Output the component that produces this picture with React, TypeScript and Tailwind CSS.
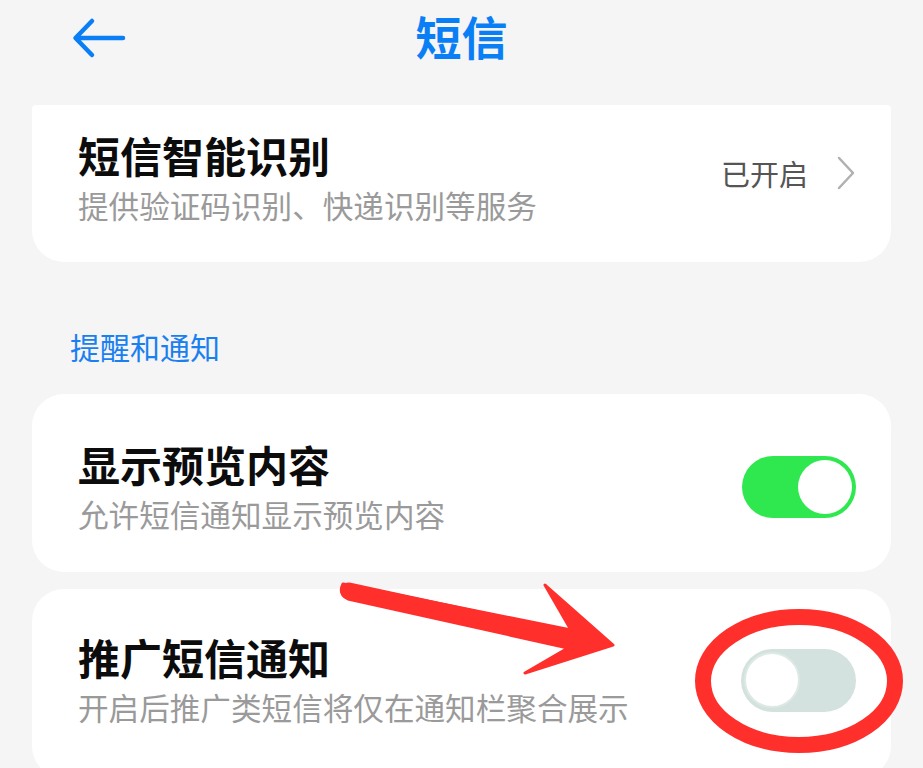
const font = { fontFamily: '"Noto Sans CJK SC", "Noto Sans", sans-serif' };

function Toggle({ on }: { on: boolean }) {
  return on ? (
    <div className="flex h-[62px] w-[114px] items-center justify-end rounded-full bg-[#2fe850] px-[4px]">
      <div className="h-[54px] w-[54px] rounded-full bg-white" />
    </div>
  ) : (
    <div className="flex h-[63px] w-[115px] items-center justify-start rounded-full bg-[#d3e2de] px-[3px]">
      <div className="h-[56px] w-[56px] rounded-full border-[2px] border-[#dde9e5] bg-white" />
    </div>
  );
}

function Row({
  title,
  sub,
  right,
  className,
}: {
  title: string;
  sub: string;
  right: React.ReactNode;
  className: string;
}) {
  return (
    <div className={`mx-[32px] flex items-center bg-white pl-[46px] pr-[35px] ${className}`}>
      <div className="flex flex-1 flex-col gap-[4px]">
        <div className="text-[42px] font-bold leading-[50px] text-[#0c0c0c]">{title}</div>
        <div className="text-[30.6px] leading-[42px] text-[#9a9a9a]">{sub}</div>
      </div>
      {right}
    </div>
  );
}

export default function App() {
  return (
    <div className="relative h-[768px] w-[923px] overflow-hidden bg-[#f5f5f5]" style={font}>
      {/* header */}
      <div className="relative flex h-[105px] items-start justify-center">
        <svg className="absolute left-[70px] top-[16px]" width="60" height="44" viewBox="0 0 60 44">
          <path
            d="M53 22H6M22 5L5.5 22L22 39"
            fill="none"
            stroke="#0a7ff5"
            strokeWidth="4.5"
            strokeLinecap="round"
            strokeLinejoin="round"
          />
        </svg>
        <div className="pt-[4px] text-[46px] font-bold leading-[62px] text-[#0a7ff5]">短信</div>
      </div>

      <Row
        title="短信智能识别"
        sub="提供验证码识别、快递识别等服务"
        className="rounded-b-[32px] rounded-t-[4px] pb-[36px] pt-[25px]"
        right={
          <div className="flex items-center gap-[28px] pb-[10px]">
            <span className="text-[29px] leading-[40px] text-[#555]">已开启</span>
            <svg width="20" height="34" viewBox="0 0 20 34">
              <path
                d="M3 2L17 17L3 32"
                fill="none"
                stroke="#b0b0b0"
                strokeWidth="2.5"
                strokeLinecap="round"
                strokeLinejoin="round"
              />
            </svg>
          </div>
        }
      />

      <div className="pb-[27px] pl-[70px] pt-[63px] text-[30px] leading-[42px] text-[#1a80f0]">提醒和通知</div>

      <Row
        title="显示预览内容"
        sub="允许短信通知显示预览内容"
        className="rounded-[32px] pb-[37px] pt-[45px]"
        right={<Toggle on />}
      />

      <div className="h-[17px]" />

      <Row
        title="推广短信通知"
        sub="开启后推广类短信将仅在通知栏聚合展示"
        className="rounded-[32px] pb-[50px] pt-[43px]"
        right={<Toggle on={false} />}
      />

      {/* red annotation */}
      <svg className="pointer-events-none absolute left-0 top-0" width="923" height="768" viewBox="0 0 923 768">
        <path
          d="M343 584 Q338 594 348 599 L568 648 L525 673 L613 645 L545 585 L571 630 Z"
          fill="#ff2f2c"
          stroke="#ff2f2c"
          strokeWidth="3"
          strokeLinejoin="round"
        />
        <line x1="349" y1="591" x2="570" y2="639" stroke="#ff2f2c" strokeWidth="17" strokeLinecap="round" />
        <ellipse cx="799" cy="681" rx="96" ry="64" fill="none" stroke="#ff2f2c" strokeWidth="16" />
      </svg>
    </div>
  );
}
